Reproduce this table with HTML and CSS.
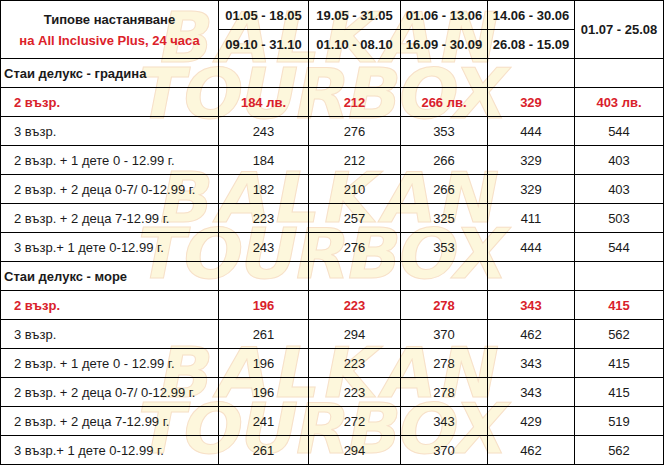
FILE: index.html
```html
<!DOCTYPE html>
<html lang="bg">
<head>
<meta charset="utf-8">
<title>Цени</title>
<link rel="stylesheet" href="styles.css">
</head>
<body>
<div class="sheet">
  <div class="watermark wm-top" aria-hidden="true"><div class="wm-line wm-a">BALKAN</div><div class="wm-line wm-b">TOURBOX</div></div>
  <div class="watermark wm-mid" aria-hidden="true"><div class="wm-line wm-a">BALKAN</div><div class="wm-line wm-b">TOURBOX</div></div>
  <div class="watermark wm-bot" aria-hidden="true"><div class="wm-line wm-a">BALKAN</div><div class="wm-line wm-b">TOURBOX</div></div>
  <table class="prices">
    <colgroup>
      <col class="c-label"><col class="c-p1"><col class="c-p2"><col class="c-p3"><col class="c-p4"><col class="c-p5">
    </colgroup>
    <thead>
      <tr>
        <th rowspan="2" class="head-title"><div class="ht-1">Типове настаняване</div><div class="ht-2">на All Inclusive Plus, 24 часа</div></th>
        <th>01.05 - 18.05</th>
        <th>19.05 - 31.05</th>
        <th>01.06 - 13.06</th>
        <th>14.06 - 30.06</th>
        <th rowspan="2">01.07 - 25.08</th>
      </tr>
      <tr>
        <th>09.10 - 31.10</th>
        <th>01.10 - 08.10</th>
        <th>16.09 - 30.09</th>
        <th>26.08 - 15.09</th>
      </tr>
    </thead>
    <tbody>
      <tr class="cat"><td class="lbl">Стаи делукс - градина</td><td></td><td></td><td></td><td></td><td></td></tr>
      <tr class="hl"><td class="lbl">2 възр.</td><td>184 лв.</td><td>212</td><td>266 лв.</td><td>329</td><td>403 лв.</td></tr>
      <tr><td class="lbl">3 възр.</td><td>243</td><td>276</td><td>353</td><td>444</td><td>544</td></tr>
      <tr><td class="lbl">2 възр. + 1 дете 0 - 12.99 г.</td><td>184</td><td>212</td><td>266</td><td>329</td><td>403</td></tr>
      <tr><td class="lbl">2 възр. + 2 деца 0-7/ 0-12.99 г.</td><td>182</td><td>210</td><td>266</td><td>329</td><td>403</td></tr>
      <tr><td class="lbl">2 възр. + 2 деца 7-12.99 г.</td><td>223</td><td>257</td><td>325</td><td>411</td><td>503</td></tr>
      <tr><td class="lbl">3 възр.+ 1 дете 0-12.99 г.</td><td>243</td><td>276</td><td>353</td><td>444</td><td>544</td></tr>
      <tr class="cat"><td class="lbl">Стаи делукс - море</td><td></td><td></td><td></td><td></td><td></td></tr>
      <tr class="hl"><td class="lbl">2 възр.</td><td>196</td><td>223</td><td>278</td><td>343</td><td>415</td></tr>
      <tr><td class="lbl">3 възр.</td><td>261</td><td>294</td><td>370</td><td>462</td><td>562</td></tr>
      <tr><td class="lbl">2 възр. + 1 дете 0 - 12.99 г.</td><td>196</td><td>223</td><td>278</td><td>343</td><td>415</td></tr>
      <tr><td class="lbl">2 възр. + 2 деца 0-7/ 0-12.99 г.</td><td>196</td><td>223</td><td>278</td><td>343</td><td>415</td></tr>
      <tr><td class="lbl">2 възр. + 2 деца 7-12.99 г.</td><td>241</td><td>272</td><td>343</td><td>429</td><td>519</td></tr>
      <tr><td class="lbl">3 възр.+ 1 дете 0-12.99 г.</td><td>261</td><td>294</td><td>370</td><td>462</td><td>562</td></tr>
    </tbody>
  </table>
</div>
</body>
</html>
```

FILE: styles.css
```css
html, body {
  margin: 0;
  padding: 0;
  background: #ffffff;
}

.sheet {
  position: relative;
  width: 665px;
  height: 465px;
  overflow: hidden;
  font-family: "Liberation Sans", Arial, sans-serif;
  font-size: 13px;
  color: #1a1a1a;
}

.watermark {
  position: absolute;
  z-index: 0;
  font-family: "DejaVu Sans", "Liberation Sans", sans-serif;
  font-weight: bold;
  font-style: italic;
  font-size: 70px;
  line-height: 56px;
  color: #fdf7dc;
  -webkit-text-stroke: 1px #f7e0c8;
  pointer-events: none;
  white-space: nowrap;
  user-select: none;
}

.wm-a {
  letter-spacing: 4px;
  padding-left: 22px;
}

.wm-b {
  letter-spacing: -2px;
}

.wm-top { left: 138px; top: 10px; }
.wm-mid { left: 138px; top: 170px; }
.wm-bot { left: 138px; top: 345px; }

.prices {
  position: relative;
  z-index: 1;
  border-collapse: collapse;
  table-layout: fixed;
  width: 663px;
  background: transparent;
}

.c-label { width: 218px; }
.c-p1 { width: 90px; }
.c-p2 { width: 92px; }
.c-p3 { width: 87px; }
.c-p4 { width: 87px; }
.c-p5 { width: 89px; }

.prices th,
.prices td {
  border: 1px solid #000;
  height: 28px;
  padding: 0;
  text-align: center;
  vertical-align: middle;
  white-space: nowrap;
  overflow: hidden;
}

.prices th {
  font-weight: bold;
}

.head-title .ht-1 {
  line-height: 21px;
}

.head-title .ht-2 {
  line-height: 21px;
  color: #dc2129;
}

.prices td.lbl {
  text-align: left;
  padding-left: 13px;
}

.cat td.lbl {
  padding-left: 3px;
  font-weight: bold;
}

.hl td {
  color: #d9212b;
  font-weight: bold;
}
```
